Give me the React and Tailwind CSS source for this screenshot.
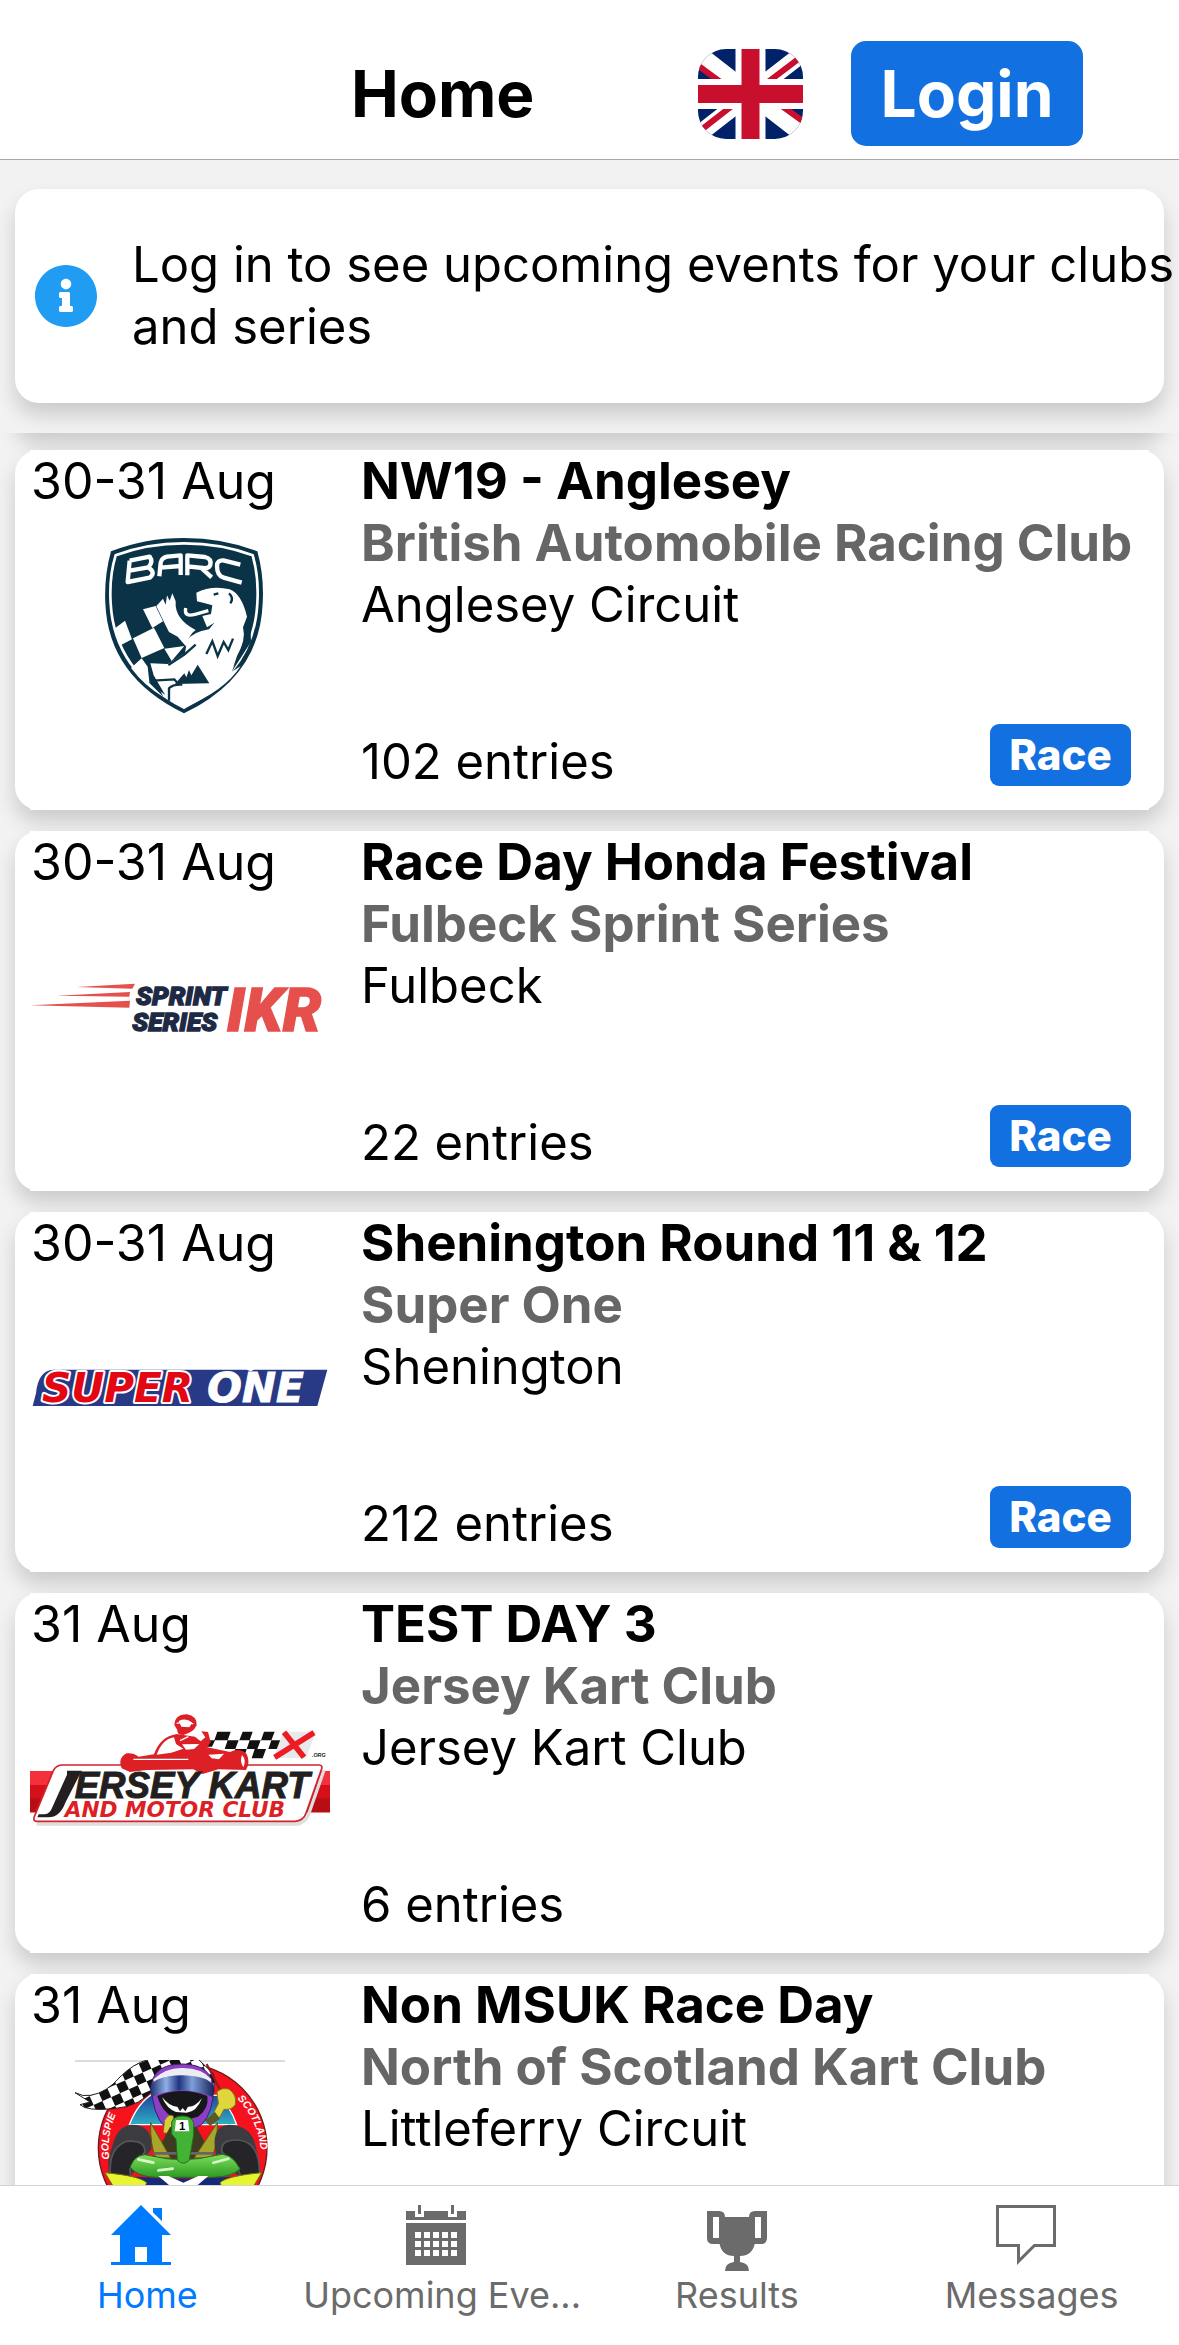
import React from 'react';
import { FaInfoCircle } from 'react-icons/fa';

const UnionJack = () => (
  <svg className="h-[90px] w-[105px] rounded-[28px]" viewBox="0 0 105 90" aria-hidden="true">
    <rect width="105" height="90" fill="#012169" />
    <path d="M-8 -2 L113 92 M113 -2 L-8 92" stroke="#fff" strokeWidth="17" />
    <path d="M-6 12 L40 46 M111 2 L58 42 M-6 88 L48 46 M113 78 L66 44" stroke="#c8102e" strokeWidth="6" />
    <path d="M52.5 0 V90 M0 45 H105" stroke="#fff" strokeWidth="30" />
    <path d="M52.5 0 V90 M0 45 H105" stroke="#c8102e" strokeWidth="18" />
  </svg>
);

const BarcLogo = () => (
  <svg className="h-[180px] w-[300px]" viewBox="-195 18 900 540" aria-hidden="true">
    <path d="M267 24 Q385 24 487 64 Q508 140 503 220 Q495 440 267 550 Q40 440 31 220 Q27 140 48 64 Q150 24 267 24Z" fill="#0b3347" />
    <path d="M267 40 Q380 40 473 76 Q492 140 487 220 Q477 425 267 533 Q58 425 47 220 Q42 140 62 76 Q155 40 267 40Z" fill="none" stroke="#fff" strokeWidth="8" />
    <g fill="none" stroke="#fff" strokeWidth="13" strokeLinejoin="round">
      <path d="M104 92 L164 80 Q176 96 160 112 Q184 128 164 143 L98 156 L104 92 M104 122 L160 112" />
      <path d="M193 139 L197 98 Q200 84 216 80 L257 76 V135 M197 113 L257 108" />
      <path d="M277 136 V76 L330 81 Q350 86 346 104 Q344 116 324 114 L277 109 M318 113 L350 142" />
      <path d="M436 104 L385 91 Q366 90 366 108 Q366 137 386 143 L440 158" />
    </g>
    <g fill="#fff">
      <path d="M60 295 L90 272 L111 328 L78 345 L64 318Z" />
      <path d="M144 238 L182 228 L204 274 L172 294Z" />
      <path d="M114 325 L177 293 L208 354 L140 384Z" />
      <path d="M108 414 L140 385 L158 410 L163 455 L205 500 Q150 470 108 414Z" />
      <path d="M184 228 L204 206 L212 224 L216 196 L224 212 L232 190 L242 214 Q238 268 302 300 Q280 315 274 350 L248 320 L222 306 L208 278Z" />
      <path d="M208 356 L268 348 L230 393Z" />
      <path d="M304 188 Q350 165 404 178 Q440 192 456 260 L444 292 Q454 330 426 378 L410 426 L437 408 Q390 482 267 533 L218 508 L190 460 L176 436 L166 400 L218 402 L270 370 L276 332 Q292 306 342 298 L358 278 L336 292 L322 258 L348 252 L352 226 L330 220 L306 214Z" />
    </g>
    <path d="M272 234 Q266 262 300 253 L340 242" fill="none" stroke="#fff" strokeWidth="10" />
    <path d="M220 405 L268 374 L302 344 M222 512 V475 Q234 462 262 464 M334 372 L352 334 L368 378 L386 336 L400 360 L414 326 M356 194 L370 190 M402 190 Q418 204 406 220 M174 452 L238 448 L250 462" fill="none" stroke="#0b3347" strokeWidth="7" />
    <path d="M240 462 L268 430 L274 442 L282 420 L289 436 L308 404 L343 460Z M160 456 L186 462 L205 500Z M444 340 L466 276 L468 335 L410 426Z" fill="#0b3347" />
  </svg>
);

const SprintLogo = () => (
  <svg className="h-[180px] w-[300px]" viewBox="90 -129 900 540" aria-hidden="true">
    <g fill="#e5504d">
      <path d="M230 81 L405 71 L397 86 Z" />
      <path d="M170 107 L390 96 L388 110 Z" />
      <path d="M90 136 L390 122 L388 143 Z" />
    </g>
    <g fontFamily="Roboto, sans-serif" fontWeight="900" fontStyle="italic">
      <text x="408" y="135" fontSize="79" fill="#1e2a44" stroke="#1e2a44" strokeWidth="4">SPRINT</text>
      <text x="397" y="212" fontSize="79" fill="#1e2a44" stroke="#1e2a44" strokeWidth="4">SERIES</text>
      <text x="680" y="212" fontSize="184" fill="#e5504d" stroke="#e5504d" strokeWidth="4">IKR</text>
    </g>
  </svg>
);

const SuperOneLogo = () => (
  <svg className="h-[180px] w-[300px]" viewBox="90 -156 900 540" aria-hidden="true">
    <path d="M98 168 L108 130 Q114 62 160 59 H632 L740 59 L752 64 L762 59 H982 L952 168 H98Z" fill="#283a85" />
    <g fontFamily="'DejaVu Sans', sans-serif" fontWeight="bold" fontStyle="italic" fontSize="122">
      <text x="126" y="157" fill="#e30613" stroke="#fff" strokeWidth="12" paintOrder="stroke" strokeLinejoin="round">SUPER</text>
      <text x="622" y="157" fill="#fff" stroke="#fff" strokeWidth="3">ONE</text>
    </g>
  </svg>
);

const JerseyLogo = () => (
  <svg className="h-[180px] w-[300px]" viewBox="90 -63 900 540" aria-hidden="true">
    <rect x="90" y="213" width="900" height="124" fill="#d4111b" />
    <path d="M90 213 H990 V255 H90Z" fill="#f3303c" />
    <path d="M90 295 H990 V337 H90Z" fill="#b80d15" />
    <path d="M110 372 H890 Q915 368 925 345 L972 210" fill="none" stroke="#dedede" strokeWidth="10" />
    <path d="M185 195 H958 Q968 196 965 206 L918 340 Q910 363 885 364 H110 Q98 364 103 350 L160 212 Q168 196 185 195Z" fill="#fff" stroke="#d2232a" strokeWidth="5" />
    <path d="M652 95 H692 L683 121 H643Z M728 95 H758 L749 121 H718Z M792 95 H824 L814 121 H783Z M683 121 H716 L706 147 H674Z M749 121 H782 L772 147 H740Z M814 121 H844 L834 147 H805Z M628 121 H645 L636 140 H620Z M706 147 H740 L732 172 H698Z M764 147 H798 L788 175 H755Z" fill="#111" />
    <path d="M850 95 H948 L918 174 H820Z" fill="#e9e9ec" />
    <path d="M852 97 L912 172 M942 98 L824 172" stroke="#ed1c24" strokeWidth="17" />
    <text x="936" y="172" fontSize="16" fontWeight="bold" fontStyle="italic" fontFamily="'Liberation Sans', sans-serif" fill="#222">.ORG</text>
    <g fill="#dd1f26">
      <path d="M523 75 Q525 43 560 43 Q592 48 590 76 Q580 98 550 105 Q530 105 532 90 Z" />
      <path d="M365 205 Q352 175 380 160 Q400 158 416 170 L462 163 Q480 110 530 102 L585 110 L602 124 L616 112 L604 94 L624 96 L632 126 L622 142 L690 156 Q720 142 740 162 Q752 188 738 210 L655 208 L608 222 L580 208 L440 210 L390 216Z" />
    </g>
    <path d="M470 164 Q487 118 522 112 L528 132 L550 146 L514 158Z M546 133 L598 132 L582 147 L558 149Z M536 63 Q558 52 577 68 L568 82 L544 80Z M625 164 L672 161 L657 178 L635 175Z M726 165 Q740 180 730 202 Q718 185 726 165Z" fill="#fff" />
    <path d="M400 178 H565 M530 70 L560 64 L580 72 M565 110 L540 122" stroke="#fff" strokeWidth="4" fill="none" />
    <path d="M201 212 H246 L240 222 L196 308 Q180 351 145 352 H112 L116 343 H134 Q150 342 157 322 L201 224Z" fill="#231f20" />
    <g fontWeight="bold" fontStyle="italic">
      <text x="224" y="293" fontSize="110" fill="#231f20" stroke="#231f20" strokeWidth="3" fontFamily="'Liberation Sans', sans-serif">ERSEY KART</text>
      <text x="194" y="352" fontSize="65" fill="#dd1f26" fontFamily="'DejaVu Sans', sans-serif">AND MOTOR CLUB</text>
    </g>
  </svg>
);

const GolspieLogo = () => (
  <svg className="h-[180px] w-[300px]" viewBox="-120 24 900 540" aria-hidden="true">
    <defs>
      <pattern id="checks" width="58" height="58" patternUnits="userSpaceOnUse" patternTransform="rotate(-24)">
        <rect width="58" height="58" fill="#fff" />
        <path d="M0 0 H29 V29 H0Z M29 29 H58 V58 H29Z" fill="#111" />
      </pattern>
      <linearGradient id="visor">
        <stop offset="0" stopColor="#1b2a6b" />
        <stop offset="0.25" stopColor="#8fb0e6" />
        <stop offset="0.45" stopColor="#20357f" />
        <stop offset="0.65" stopColor="#7f9fda" />
        <stop offset="1" stopColor="#141f55" />
      </linearGradient>
      <linearGradient id="bumper" x2="0" y2="1">
        <stop offset="0" stopColor="#7fe05c" />
        <stop offset="1" stopColor="#2c9a23" />
      </linearGradient>
      <linearGradient id="suit" x2="0" y2="1">
        <stop offset="0" stopColor="#1c3f9c" />
        <stop offset="1" stopColor="#2fb0c4" />
      </linearGradient>
      <path id="arcLeft" d="M118 322 A250 250 0 0 1 160 148" />
      <path id="arcRight" d="M502 140 A250 250 0 0 1 572 330" />
    </defs>
    <rect x="15" y="24" width="630" height="6" fill="#dcdcdc" />
    <circle cx="338" cy="288" r="253" fill="#f5121d" stroke="#6b1a1f" strokeWidth="4" />
    <path d="M178 218 Q205 150 250 125 L440 130 Q480 160 500 218Z" fill="url(#suit)" stroke="#fff" strokeWidth="4" />
    <path d="M15 122 Q40 135 62 130 Q110 122 150 75 Q190 35 235 22 H385 L430 65 Q440 100 425 115 L260 100 Q215 165 130 170 Q50 178 30 158 L60 150Z" fill="url(#checks)" stroke="#222" strokeWidth="3" />
    <path d="M410 36 L460 132" stroke="#8b1c20" strokeWidth="6" />
    <path d="M441 120 Q456 105 478 112 Q502 130 496 158 Q485 175 462 172 L450 195 Q430 200 432 180 L445 155Z" fill="#e0d53a" stroke="#7d741c" strokeWidth="3" />
    <path d="M405 205 L435 180 L450 200 L420 222Z" fill="#5b5a26" />
    <path d="M245 95 Q255 36 338 36 Q420 38 430 100 Q432 180 395 218 L350 240 L288 228 Q245 190 245 95Z" fill="#8b3fc4" stroke="#3f1d66" strokeWidth="3" />
    <path d="M250 82 Q290 45 340 48 Q395 48 424 82 L420 96 Q340 58 254 96Z" fill="#ececf2" />
    <path d="M240 110 Q244 72 338 70 Q430 72 434 115 L428 135 Q335 95 244 135Z" fill="url(#visor)" />
    <path d="M262 132 Q335 102 412 132 Q418 170 384 194 L338 206 Q280 195 262 132Z" fill="#17171a" />
    <path d="M276 135 Q300 165 322 164 L330 178 L338 168 L346 178 L354 164 Q376 165 396 138 Q380 180 350 182 L318 180 Q290 170 276 135Z" fill="#fff" />
    <path d="M284 205 Q296 184 310 192 L308 245 L280 242Z" fill="#d9cd39" stroke="#77701f" strokeWidth="2" />
    <path d="M300 225 H380 L430 320 H250Z" fill="#3d3b20" />
    <path d="M242 212 L302 318 H258 Q240 280 242 212Z M442 212 L372 318 H424 Q444 280 442 212Z" fill="#a8a62a" stroke="#5a5918" strokeWidth="3" />
    <path d="M128 280 Q140 225 182 218 Q250 215 244 292 L180 375 H122 Q104 340 128 280Z M434 280 Q430 222 478 218 Q545 222 556 280 Q572 330 562 375 H510 L440 320Z" fill="#3c3c40" />
    <path d="M122 375 Q112 290 170 268 Q225 262 225 300 L180 350 L182 375Z M568 372 Q572 270 504 264 Q450 262 456 300 L504 350 L512 372Z" fill="#252529" stroke="#55555a" strokeWidth="5" />
    <path d="M180 345 Q200 296 245 312 Q340 335 438 310 Q480 295 510 350 Q490 374 430 376 H260 Q200 374 180 345Z" fill="url(#bumper)" stroke="#216f1c" strokeWidth="3" />
    <path d="M205 322 L250 332 M430 332 L475 320 M265 355 L308 350" stroke="#d9f7c8" strokeWidth="8" strokeLinecap="round" />
    <path d="M250 304 H430" stroke="#66666a" strokeWidth="8" />
    <path d="M305 210 Q312 192 337 192 Q365 192 371 212 V248 L358 325 Q340 342 322 325 L318 262 L305 246Z" fill="#43b336" stroke="#216f1c" strokeWidth="3" />
    <path d="M318 204 H354 L358 238 H314Z" fill="#fff" />
    <text x="327" y="233" fontSize="34" fontWeight="bold" fontFamily="'Liberation Sans', sans-serif">1</text>
    <path d="M200 374 Q335 385 480 374 L560 400 L500 480 H180 L130 400Z" fill="#152a78" />
    <path d="M265 372 H295 L340 392 L385 372 H415 L370 410 H310Z" fill="#fff" />
    <path d="M105 362 Q210 372 230 392 L218 420 H140Z M575 362 Q470 372 450 392 L462 420 H540Z" fill="#e6f52e" stroke="#6c7316" strokeWidth="3" />
    <g fill="#fff" fontSize="31" fontWeight="bold" fontStyle="italic" fontFamily="'Liberation Sans', sans-serif">
      <text><textPath href="#arcLeft">GOLSPIE</textPath></text>
      <text><textPath href="#arcRight">SCOTLAND</textPath></text>
    </g>
  </svg>
);

const events = [
  { id: 1, date: '30-31 Aug', title: 'NW19 - Anglesey', club: 'British Automobile Racing Club', venue: 'Anglesey Circuit', entries: '102 entries', race: true, Logo: BarcLogo },
  { id: 2, date: '30-31 Aug', title: 'Race Day Honda Festival', club: 'Fulbeck Sprint Series', venue: 'Fulbeck', entries: '22 entries', race: true, Logo: SprintLogo },
  { id: 3, date: '30-31 Aug', title: 'Shenington Round 11 & 12', club: 'Super One', venue: 'Shenington', entries: '212 entries', race: true, Logo: SuperOneLogo },
  { id: 4, date: '31 Aug', title: 'TEST DAY 3', club: 'Jersey Kart Club', venue: 'Jersey Kart Club', entries: '6 entries', Logo: JerseyLogo },
  { id: 5, date: '31 Aug', title: 'Non MSUK Race Day', club: 'North of Scotland Kart Club', venue: 'Littleferry Circuit', Logo: GolspieLogo },
];

const tabs = [
  {
    label: 'Home',
    active: true,
    icon: 'M10 0 L20 10 H17 V19 H20 V20 H0 V19 H3 V10 H0Z M8 14 V19 H12 V14Z M14 1 H17 V5.4 L14 2.5Z',
  },
  {
    label: 'Upcoming Eve...',
    icon: 'M0 2 H3 V4 H6 V2 H14 V4 H17 V2 H20 V5 H0Z M4 0 H5 V3 H4Z M15 0 H16 V3 H15Z M0 6 H20 V20 H0Z M3 9 H5 V11 H3Z M6 9 H8 V11 H6Z M9 9 H11 V11 H9Z M12 9 H14 V11 H12Z M15 9 H17 V11 H15Z M3 12 H5 V14 H3Z M6 12 H8 V14 H6Z M9 12 H11 V14 H9Z M12 12 H14 V14 H12Z M15 12 H17 V14 H15Z M3 15 H5 V17 H3Z M6 15 H8 V17 H6Z M9 15 H11 V17 H9Z M12 15 H14 V17 H12Z M15 15 H17 V17 H15Z',
  },
  {
    label: 'Results',
    icon: 'M2 2 H6 Q8 2 8 4 H16 Q16 2 18 2 H22 V11 Q22 13 20 13 H17.9 Q17 17 13 17 V19 Q16 19.3 16 22 H8 Q8 19.3 11 19 V17 Q7 17 6.2 13 H4 Q2 13 2 11Z M4 4 V11 H6 V4Z M18 4 V11 H20 V4Z',
  },
  {
    label: 'Messages',
    icon: 'M0 0 H20 V14 H13 L7 20 V14 H0Z M1 1 V13 H8 V17.6 L12.6 13 H19 V1Z',
  },
];

const EventCard = ({ event }) => {
  const { date, title, club, venue, entries, race, Logo } = event;

  return (
    <article className="rounded-[24px] bg-white px-[15px] shadow-[0_12px_20px_rgba(0,0,0,0.16)]">
      <div className="flex min-h-[360px] bg-white">
        <div className="w-[300px] shrink-0">
          <p className="mb-6 pl-px text-[50px] leading-[62px]">{date}</p>
          <Logo />
        </div>
        <div className="ml-[31px] flex flex-1 flex-col whitespace-nowrap">
          <h2 className="text-[51px] leading-[62px] font-bold">{title}</h2>
          <p className="text-[51px] leading-[62px] font-bold text-[#666]">{club}</p>
          <p>{venue}</p>
          <div className="mt-auto flex items-start justify-between pr-[18px] pb-[17px]">
            <p className="pt-[7px]">{entries}</p>
            {race && (
              <span className="flex h-[62px] w-[141px] items-center justify-center rounded-[9px] bg-[#1270e0] text-[42px] font-extrabold text-white">
                Race
              </span>
            )}
          </div>
        </div>
      </div>
    </article>
  );
};

const App = () => {
  return (
    <div className="flex h-screen flex-col bg-[#f2f2f2] font-['Inter',sans-serif] text-[49px] leading-[62px] text-black">
      <header className="flex h-[160px] shrink-0 items-center border-b border-[#a9a9ab] bg-white pt-7 pr-24">
        <h1 className="ml-[32.4%] text-[64px] leading-[80px] font-bold">Home</h1>
        <div className="ml-auto flex items-center gap-12">
          <button type="button" aria-label="Language">
            <UnionJack />
          </button>
          <button type="button" className="h-[105px] w-[232px] rounded-[15px] bg-[#1270e0] text-[64px] leading-[80px] font-bold text-white">
            Login
          </button>
        </div>
      </header>

      <main className="flex min-h-0 flex-1 flex-col">
        <section className="relative z-10 shrink-0 overflow-hidden bg-[#f2f2f2] px-[15px] pt-[29px] pb-[30px]">
          <div className="flex items-center gap-[34px] rounded-[24px] bg-white py-[45px] pl-[19px] shadow-[0_12px_20px_rgba(0,0,0,0.16)]">
            <FaInfoCircle className="size-16 shrink-0 text-[#209cf3]" />
            <p className="-mr-[15px] flex-1">Log in to see upcoming events for your clubs and series</p>
          </div>
        </section>

        <div className="min-h-0 flex-1 overflow-y-auto px-[15px] [scrollbar-width:none]">
          <div className="-mt-[60px] h-[60px] rounded-[24px] shadow-[0_12px_20px_rgba(0,0,0,0.16)]" />
          <div className="flex flex-col gap-[21px] pt-[17px]">
            {events.map((event) => (
              <EventCard key={event.id} event={event} />
            ))}
          </div>
        </div>
      </main>

      <nav className="grid h-[160px] shrink-0 grid-cols-4 border-t border-[#d3d3d3] bg-white pt-[19px] text-4xl leading-[42px]">
        {tabs.map(({ label, icon, active }) => (
          <a key={label} href="#" className={active ? 'flex flex-col items-center text-[#007aff]' : 'flex flex-col items-center text-[#6b6b6b]'}>
            <svg className="h-[69px] w-[72px]" viewBox="0 0 24 23" fill="currentColor" fillRule="evenodd" aria-hidden="true">
              <path d={icon} />
            </svg>
            <span className="whitespace-nowrap">{label}</span>
          </a>
        ))}
      </nav>
    </div>
  );
};

export default App;
